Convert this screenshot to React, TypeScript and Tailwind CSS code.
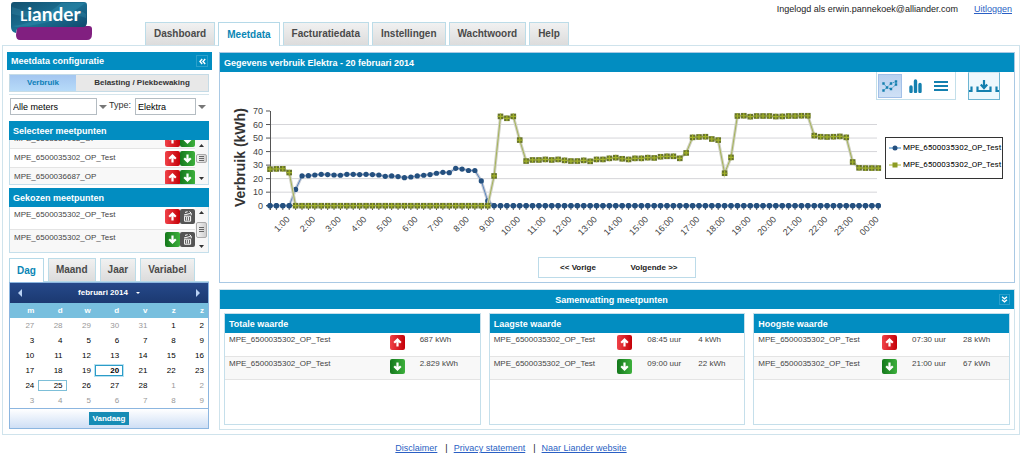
import type { ReactNode } from "react"

const METER = "MPE_6500035302_OP_Test"

const NAV_TABS = ["Dashboard", "Meetdata", "Facturatiedata", "Instellingen", "Wachtwoord", "Help"]
const PERIOD_TABS = ["Dag", "Maand", "Jaar", "Variabel"]

const fill = (n: number, v: number): number[] => new Array(n).fill(v)

// quarter-hour values, 00:15 up to 00:00
const BLUE = [
  ...fill(4, 0), 12, 22, 22.2, 22.7, 23.2, 23, 22.7, 22.5, 23.2, 23.2, 23, 23.2, 23, 22.7, 21.7, 22, 21.5,
  20.7, 21.2, 22, 22.5, 23, 24, 24.7, 24.4, 27.6, 27.1, 26, 26, 18.3, 3.5, ...fill(61, 0),
]
const GREEN = [
  27, 27.2, 27.3, 24.5, ...fill(31, 0), 22, 66, 64.6, 66, 48.5, 33, 33.8, 33.8, 34.2, 33.8, 34.2, 33.5, 33, 33,
  33.5, 32.8, 34.2, 34.2, 35, 35.5, 34.7, 34.2, 35, 35, 35.5, 35.3, 36.2, 36.5, 36.5, 35, 39, 50.5, 50.8, 51,
  49.3, 48.5, 24, 35.7, 66.3, 66.5, 65.8, 66.3, 66.3, 66.3, 65.9, 66, 66.3, 66.3, 66.5, 66.5, 51.8, 51, 50.8,
  51, 51.2, 50.5, 32.3, 28, 27.8, 27.8, 27.8,
]

const px = (i: number) => 50 + i * 6.403
const py = (v: number) => 105.7 - v * 1.353
const toPoints = (data: number[]) => data.map((v, i) => `${px(i)},${py(v)}`).join(" ")

function ArrowIcon({ dir }: { dir: "up" | "down" }) {
  const up = dir === "up"
  return (
    <svg viewBox="0 0 15 15" className="block h-[15px] w-[15px] shrink-0">
      <defs>
        <linearGradient id={`arrow-${dir}`}>
          <stop offset="0" stopColor={up ? "#f04248" : "#14781c"} />
          <stop offset="1" stopColor={up ? "#c40008" : "#3db03c"} />
        </linearGradient>
      </defs>
      <rect width="15" height="15" rx="2" fill={`url(#arrow-${dir})`} />
      <path
        d={up ? "M7.5 11.5V5M4.2 7.8L7.5 4.6L10.8 7.8" : "M7.5 3.5V10M4.2 7.2L7.5 10.4L10.8 7.2"}
        fill="none"
        stroke="#fff"
        strokeWidth="2.2"
      />
    </svg>
  )
}

function TrashIcon() {
  return (
    <svg viewBox="0 0 15 15" className="block h-[15px] w-[15px]">
      <rect width="15" height="15" rx="2" fill="#555" />
      <path d="M4.6 7.2h6v5h-6z" fill="none" stroke="#fff" />
      <path d="M6.7 8v3.5M8.6 8v3.5" stroke="#fff" />
      <path d="M4 6L10.6 4.4M5 3.4l2.6-.7M9.6 2.5l1.6 1.8v2" fill="none" stroke="#fff" />
    </svg>
  )
}

function Logo() {
  return (
    <svg viewBox="0 0 82 39" className="block h-[39px] w-[82px]" role="img" aria-label="Liander">
      <defs>
        <linearGradient id="logo-blue" x1="0" y1="0" x2="1" y2="1">
          <stop offset="0" stopColor="#12506f" />
          <stop offset="0.5" stopColor="#1b7093" />
          <stop offset="1" stopColor="#0e3f63" />
        </linearGradient>
      </defs>
      <path d="M6 24H78q3 0 3 3V32q0 6-5 6H9q-4 0-4-5z" fill="#811f80" />
      <path d="M3 0H73q3 0 3 3V20q0 5-4 5H10q-5 0-5 6Q0 30 0 25V3Q0 0 3 0z" fill="url(#logo-blue)" />
      <path d="M1 24Q26 22 50 1H74Q50 22 6 25z" fill="#3291b2" opacity="0.4" />
      <path d="M1 5Q20 12 44 9T75 12V16Q60 10 42 14T1 12z" fill="#4fb0cc" opacity="0.2" />
      <text x="9" y="19" fill="#fff" fontFamily="Lato, sans-serif" fontSize="19" fontWeight="700">
        <tspan fontSize="14">L</tspan>iander
      </text>
    </svg>
  )
}

function TabButton({ label, active, small }: { label: string; active: boolean; small?: boolean }) {
  return (
    <button
      type="button"
      className={`border border-b-0 text-[10px] font-bold ${small ? "px-[7px]" : "px-2"} ${
        active
          ? "-mb-px h-6 border-[#b5d9e8] bg-white text-[#0a86b5]"
          : "h-[23px] border-[#bcdce8] bg-linear-to-b from-[#f1f1f1] to-[#dcdcdc] text-[#4a4a4a]"
      }`}
    >
      {label}
    </button>
  )
}

function PanelHeader({ children }: { children: ReactNode }) {
  return (
    <h2 className="flex h-[19px] items-center bg-[#028dc1] px-1 text-[9px] font-bold text-white">{children}</h2>
  )
}

function Triangle() {
  return (
    <svg viewBox="0 0 8 4" className="block h-1 w-2">
      <path d="M0 0H8L4 4z" fill="#777" />
    </svg>
  )
}

function Scrollbar({ thumb }: { thumb: string }) {
  return (
    <div className="flex w-[13px] shrink-0 flex-col items-center justify-between bg-[#f7f7f7] py-1">
      <svg viewBox="0 0 5 3" className="h-[3px] w-[5px]">
        <path d="M0 3H5L2.5 0z" fill="#333" />
      </svg>
      <div className={`flex w-[11px] flex-col items-center justify-center gap-px rounded-[2px] border border-[#aaa] bg-linear-to-r from-[#f4f4f4] to-[#cfcfcf] ${thumb}`}>
        <i className="h-px w-[5px] bg-[#666]" />
        <i className="h-px w-[5px] bg-[#666]" />
        <i className="h-px w-[5px] bg-[#666]" />
      </div>
      <svg viewBox="0 0 5 3" className="h-[3px] w-[5px]">
        <path d="M0 0H5L2.5 3z" fill="#333" />
      </svg>
    </div>
  )
}

function IconButton({ label, children }: { label: string; children: ReactNode }) {
  return (
    <button type="button" aria-label={label}>
      {children}
    </button>
  )
}

function MeterLists() {
  return (
    <>
      <section className="mt-1.5">
        <PanelHeader>Selecteer meetpunten</PanelHeader>
        <div className="flex h-[45px] overflow-hidden border border-t-0 border-[#c5dfeb]">
          <ul className="-mt-2.5 flex-1 text-[8px] text-[#444]">
            {["MPE_6513637018_OP", METER, "MPE_6500036687_OP"].map((name) => (
              <li key={name} className="flex h-[19px] items-center justify-between border-b border-[#e4e4e4] pl-1 even:bg-white odd:bg-[#f8f8f8]">
                {name}
                <span className="flex">
                  <IconButton label="Afname"><ArrowIcon dir="up" /></IconButton>
                  <IconButton label="Teruglevering"><ArrowIcon dir="down" /></IconButton>
                </span>
              </li>
            ))}
          </ul>
          <Scrollbar thumb="h-[9px] mb-2" />
        </div>
      </section>
      <section className="mt-[3px]">
        <PanelHeader>Gekozen meetpunten</PanelHeader>
        <div className="flex h-[46px] overflow-hidden border border-t-0 border-[#c5dfeb]">
          <ul className="flex-1 text-[8px] text-[#444]">
            {(["up", "down"] as const).map((dir) => (
              <li key={dir} className="flex h-[23px] items-start justify-between border-b border-[#e4e4e4] pl-1 even:bg-[#f8f8f8]">
                <span className="pt-0.5">{METER}</span>
                <span className="flex pt-0.5">
                  <ArrowIcon dir={dir} />
                  <IconButton label="Verwijder"><TrashIcon /></IconButton>
                </span>
              </li>
            ))}
          </ul>
          <Scrollbar thumb="h-4" />
        </div>
      </section>
    </>
  )
}

const DAYS = [27, 28, 29, 30, 31, ...Array.from({ length: 28 }, (_, i) => i + 1), 1, 2, 3, 4, 5, 6, 7, 8, 9]
const WEEKS = [0, 1, 2, 3, 4, 5].map((w) => DAYS.slice(w * 7, w * 7 + 7))

function Calendar() {
  const dayClass = (w: number, d: number, day: number) => {
    const outside = (w === 0 && d < 5) || w === 5 || (w === 4 && d > 4)
    if (outside) return "border-transparent text-[#999]"
    if (day === 20) return "border-[#2b9cc8] font-bold text-black outline outline-[#b9e2f1]"
    if (day === 25) return "border-[#7dbfd8] text-black"
    return "border-transparent text-black"
  }
  return (
    <div className="border border-[#8cb6e0]">
      <div className="flex h-5 items-center justify-between bg-linear-to-b from-[#26498a] to-[#1b3971] px-2 text-[8px] font-bold text-white">
        <button type="button" aria-label="Vorige maand">
          <svg viewBox="0 0 4 8" className="h-2 w-1"><path d="M4 0V8L0 4z" fill="#b9d2f4" /></svg>
        </button>
        <button type="button" className="flex items-center gap-2">
          februari 2014
          <svg viewBox="0 0 4 2" className="h-0.5 w-1"><path d="M0 0H4L2 2z" fill="#fff" /></svg>
        </button>
        <button type="button" aria-label="Volgende maand">
          <svg viewBox="0 0 4 8" className="h-2 w-1"><path d="M0 0V8L4 4z" fill="#b9d2f4" /></svg>
        </button>
      </div>
      <table className="w-full table-fixed border-collapse text-right text-[8px]">
        <thead>
          <tr className="h-[15px] bg-[#78bfde] text-white">
            {["m", "d", "w", "d", "v", "z", "z"].map((d, i) => (
              <th key={i} className="p-0 pr-1 font-bold">{d}</th>
            ))}
          </tr>
        </thead>
        <tbody>
          {WEEKS.map((week, w) => (
            <tr key={w} className="h-[15px]">
              {week.map((day, d) => (
                <td key={d} className="p-0">
                  <button type="button" className={`block h-[11px] w-full border pr-[3px] text-right leading-[9px] ${dayClass(w, d, day)}`}>
                    {day}
                  </button>
                </td>
              ))}
            </tr>
          ))}
        </tbody>
      </table>
      <div className="flex h-5 items-center justify-center border-t border-[#8cb6e0] bg-linear-to-b from-white to-[#cfdff5]">
        <button type="button" className="h-[13px] bg-[#168cb5] px-1 text-[8px] font-bold text-white">Vandaag</button>
      </div>
    </div>
  )
}

function Sidebar() {
  return (
    <aside className="w-[205px] shrink-0">
      <div className="flex h-[18px] items-center justify-between bg-[#028dc1] px-1 text-[9px] font-bold text-white">
        <h2>Meetdata configuratie</h2>
        <button type="button" aria-label="Inklappen" className="flex h-3 w-3 items-center justify-center border border-[#2ba0cc]">
          <svg viewBox="0 0 7 7" className="h-[7px] w-[7px]">
            <path d="M3.2 1L1 3.5L3.2 6M6.2 1L4 3.5L6.2 6" fill="none" stroke="#fff" strokeWidth="1.4" />
          </svg>
        </button>
      </div>
      <div className="pr-[3px] pl-0.5">
        <div className="mt-1 flex h-[18px] border border-[#c5dbe6] bg-[#e8e8e8] text-[8px] font-bold">
          <button type="button" className="w-1/3 bg-linear-to-b from-[#a4c6f0] to-[#b7dbf9] text-[#0b7fb8]">Verbruik</button>
          <button type="button" className="flex-1 text-[#333]">Belasting / Piekbewaking</button>
        </div>
        <div className="mt-0.5 flex h-[21px] items-end border-t border-[#d5e5ec]">
          <select aria-label="Meters" className="ml-px h-[17px] w-[87px] appearance-none border border-[#b4bcc2] bg-white px-0.5 text-[9px] text-black">
            <option>Alle meters</option>
          </select>
          <span className="px-0.5 pb-1.5"><Triangle /></span>
          <label htmlFor="type" className="w-[26px] pb-1 text-[9px] text-[#333]">Type:</label>
          <select id="type" className="h-[17px] w-[61px] appearance-none border border-[#b4bcc2] bg-white px-0.5 text-[9px] text-black">
            <option>Elektra</option>
          </select>
          <span className="px-0.5 pb-1.5"><Triangle /></span>
        </div>
        <MeterLists />
        <div className="mt-[5px] flex gap-1 border-b border-[#b5d9e8]">
          {PERIOD_TABS.map((t) => (
            <TabButton key={t} label={t} active={t === "Dag"} small />
          ))}
        </div>
        <Calendar />
      </div>
    </aside>
  )
}

function Chart() {
  return (
    <svg viewBox="0 0 665 148" className="block min-w-0 flex-1" fontFamily="'Liberation Sans', Arial, sans-serif">
      {[10, 20, 30, 40, 50, 60].map((v) => (
        <path key={v} d={`M50 ${py(v)}H657`} stroke="#d5d5d9" />
      ))}
      {[0, 10, 20, 30, 40, 50, 60, 70].map((v) => (
        <g key={v}>
          <path d={`M46 ${py(v)}H50`} stroke="#555" />
          <text x="43" y={py(v) + 3} textAnchor="end" fontSize="9" fill="#444">{v}</text>
        </g>
      ))}
      <path d={`M50.5 ${py(70)}V110M46 ${py(0)}H659`} stroke="#555" fill="none" />
      <text transform="translate(25 107) rotate(-90)" fontSize="14" fontWeight="700" fill="#333">
        Verbruik (kWh)
      </text>
      {BLUE.map((_, i) => (
        <path key={i} d={`M${px(i)} 105V110`} stroke="#555" />
      ))}
      {Array.from({ length: 24 }, (_, h) => {
        const x = px(3 + h * 4) + 1
        return (
          <text key={h} transform={`translate(${x} 120) rotate(-45)`} textAnchor="end" fontSize="9" fill="#444">
            {h === 23 ? "00:00" : `${h + 1}:00`}
          </text>
        )
      })}
      <polyline points={toPoints(BLUE)} fill="none" stroke="#c9cdd6" strokeWidth="3" />
      <polyline points={toPoints(BLUE)} fill="none" stroke="#5c86bd" strokeWidth="1" />
      {BLUE.map((v, i) => (
        <circle key={i} cx={px(i)} cy={py(v)} r="2.6" fill="#24507f" />
      ))}
      <polyline points={toPoints(GREEN)} fill="none" stroke="#cfd0c4" strokeWidth="3" />
      <polyline points={toPoints(GREEN)} fill="none" stroke="#a6b459" strokeWidth="1" />
      {GREEN.map((v, i) => (
        <g key={i} transform={`translate(${px(i)} ${py(v)})`}>
          <rect x="-2.8" y="-2.8" width="5.6" height="5.6" fill="#66722a" />
          <path d="M-2.8 0H2.8M0 -2.8V2.8" stroke="#a3b32c" strokeWidth="1.2" />
        </g>
      ))}
      {BLUE.map((v, i) => (i > 34 || i < 4 ? <circle key={i} cx={px(i)} cy={py(v)} r="2.6" fill="#24507f" /> : null))}
    </svg>
  )
}

function Legend() {
  return (
    <ul className="mt-[37px] mr-[11px] flex h-[42px] w-[118px] shrink-0 flex-col gap-[5px] self-start border border-[#333] bg-white pt-1 pl-[3px] font-['Roboto',sans-serif] text-[8px] text-black">
      <li className="flex items-center gap-0.5">
        <svg viewBox="0 0 12 6" className="h-1.5 w-3 shrink-0">
          <path d="M0 3H12" stroke="#2f7fbf" />
          <circle cx="6" cy="3" r="2.5" fill="#24507f" />
        </svg>
        {METER}
      </li>
      <li className="flex items-center gap-0.5">
        <svg viewBox="0 0 12 6" className="h-1.5 w-3 shrink-0">
          <path d="M0 3H12" stroke="#a3b32c" />
          <rect x="3.5" y=".5" width="5" height="5" fill="#8c9b22" />
        </svg>
        {METER}
      </li>
    </ul>
  )
}

function ChartPanel() {
  return (
    <section className="border border-[#a9c9e4]">
      <PanelHeader>Gegevens verbruik Elektra - 20 februari 2014</PanelHeader>
      <div className="flex h-7 justify-end gap-3 pr-3.5">
        <div className="flex items-center border border-t-0 border-[#c3dfea] px-px">
          <button type="button" aria-label="Lijngrafiek" className="flex h-6 w-6 items-center justify-center border border-[#a3c0e8] bg-linear-to-b from-[#b9d0ef] to-[#cfe1f6]">
            <svg viewBox="0 0 16 14" className="h-3.5 w-4 shrink-0">
              <path d="M1.5 11.5L5 8.5L9 10L14 5.5M1.5 4.5L5 8.5L9 4.5L14 2.5" fill="none" stroke="#3d9dc6" strokeDasharray="1.5 .7" />
              <path d="M.3 10.3h2.4v2.4H.3zM3.8 7.3h2.4v2.4H3.8zM7.8 8.8h2.4v2.4H7.8zM12.8 4.3h2.4v2.4h-2.4zM.3 3.3h2.4v2.4H.3zM7.8 3.3h2.4v2.4H7.8zM12.8 1.3h2.4v2.4h-2.4z" fill="#147fae" />
            </svg>
          </button>
          <button type="button" aria-label="Staafgrafiek" className="flex h-6 w-[26px] items-center justify-center">
            <svg viewBox="0 0 13 14" className="h-3.5 w-[13px]">
              <path d="M2 12.5V8M6.5 12.5V2M11 12.5V5.5" stroke="#1480af" strokeWidth="3.4" strokeLinecap="round" />
            </svg>
          </button>
          <button type="button" aria-label="Tabel" className="flex h-6 w-[26px] items-center justify-center">
            <svg viewBox="0 0 14 12" className="h-3 w-3.5">
              <path d="M0 2H14M0 6H14M0 10H14" stroke="#1480af" strokeWidth="2.2" />
            </svg>
          </button>
        </div>
        <button type="button" aria-label="Download" className="flex w-8 items-center justify-center border border-[#6db5d2] border-t-[#cfe6ef] bg-[#edf8fd]">
          <svg viewBox="0 0 30 14" className="h-3.5 w-[30px]">
            <path d="M15 1V8M11.8 5.5L15 9L18.2 5.5M8.5 7.5V12H21.5V7.5M0 12H2.5V7.5M27.5 7.5V12H30" fill="none" stroke="#1480af" strokeWidth="2.2" />
          </svg>
        </button>
      </div>
      <div className="flex">
        <Chart />
        <Legend />
      </div>
      <div className="flex justify-center pt-[9px] pb-1">
        <div className="flex h-[21px] w-[158px] border border-[#bcdbe9] px-2 text-[8px] font-bold text-[#222]">
          <button type="button" className="w-[62px]">&lt;&lt; Vorige</button>
          <button type="button" className="flex-1 pl-3">Volgende &gt;&gt;</button>
        </div>
      </div>
    </section>
  )
}

type SummaryCardProps = {
  title: string
  rows: string[][]
}

function SummaryCard({ title, rows }: SummaryCardProps) {
  const total = rows[0].length === 1
  return (
    <div className="h-[112px] min-w-0 flex-1 border border-[#c5dfeb]">
      <PanelHeader>{title}</PanelHeader>
      <table className="w-full table-fixed border-collapse text-left text-[8px] text-[#444]">
        <colgroup>
          <col />
          <col className="w-[30px]" />
          {total ? <col className="w-[60px]" /> : <><col className="w-[51px]" /><col className="w-[46px]" /></>}
        </colgroup>
        <tbody>
          {rows.map((cells, i) => (
            <tr key={i} className="h-[23px] border-b border-[#e4e4e4] align-top even:bg-[#f8f8f8]">
              <td className="p-0 pt-px pl-1">{METER}</td>
              <td className="p-0 pt-0.5"><ArrowIcon dir={i === 0 ? "up" : "down"} /></td>
              {cells.map((c) => (
                <td key={c} className="p-0 pt-px">{c}</td>
              ))}
            </tr>
          ))}
        </tbody>
      </table>
    </div>
  )
}

function Summary() {
  return (
    <section className="mt-1.5 border border-[#cfe3ec]">
      <div className="flex h-[19px] items-center bg-[#028dc1] text-[9px] font-bold text-white">
        <h2 className="flex-1 pl-1 text-center">Samenvatting meetpunten</h2>
        <button type="button" aria-label="Inklappen" className="mr-1 flex h-[11px] w-[11px] items-center justify-center border border-[#2ba0cc]">
          <svg viewBox="0 0 7 7" className="h-[7px] w-[7px]">
            <path d="M1 .8L3.5 2.8L6 .8M1 3.8L3.5 5.8L6 3.8" fill="none" stroke="#fff" strokeWidth="1.4" />
          </svg>
        </button>
      </div>
      <div className="flex gap-2 px-1 pt-1 pb-1">
        <SummaryCard title="Totale waarde" rows={[["687 kWh"], ["2.829 kWh"]]} />
        <SummaryCard title="Laagste waarde" rows={[["08:45 uur", "4 kWh"], ["09:00 uur", "22 kWh"]]} />
        <SummaryCard title="Hoogste waarde" rows={[["07:30 uur", "28 kWh"], ["21:00 uur", "67 kWh"]]} />
      </div>
    </section>
  )
}

export default function App() {
  return (
    <div className="bg-white pr-[3px] pl-0.5 font-['Liberation_Sans',Arial,sans-serif] text-[9px] leading-3 text-[#222]">
      <header className="flex h-[45px] items-start">
        <a href="#" className="mt-0.5 ml-[9px]"><Logo /></a>
        <nav className="ml-[52px] flex flex-1 gap-[3px] self-end">
          {NAV_TABS.map((t) => (
            <TabButton key={t} label={t} active={t === "Meetdata"} />
          ))}
        </nav>
        <p className="flex gap-4 pt-[3px] pr-2">
          Ingelogd als erwin.pannekoek@alliander.com
          <a href="#" className="text-[#2a5fc4] underline">Uitloggen</a>
        </p>
      </header>
      <main className="flex gap-[7px] border border-[#cfe3ec] px-1 pt-1.5 pb-1">
        <Sidebar />
        <div className="min-w-0 flex-1">
          <ChartPanel />
          <Summary />
        </div>
      </main>
      <footer className="flex justify-center gap-1.5 pt-[7px] pb-1">
        <a href="#" className="text-[#2a5fc4] underline">Disclaimer</a>
        <span className="pl-0.5">|</span>
        <a href="#" className="text-[#2a5fc4] underline">Privacy statement</a>
        <span className="pl-0.5">|</span>
        <a href="#" className="text-[#2a5fc4] underline">Naar Liander website</a>
      </footer>
    </div>
  )
}
